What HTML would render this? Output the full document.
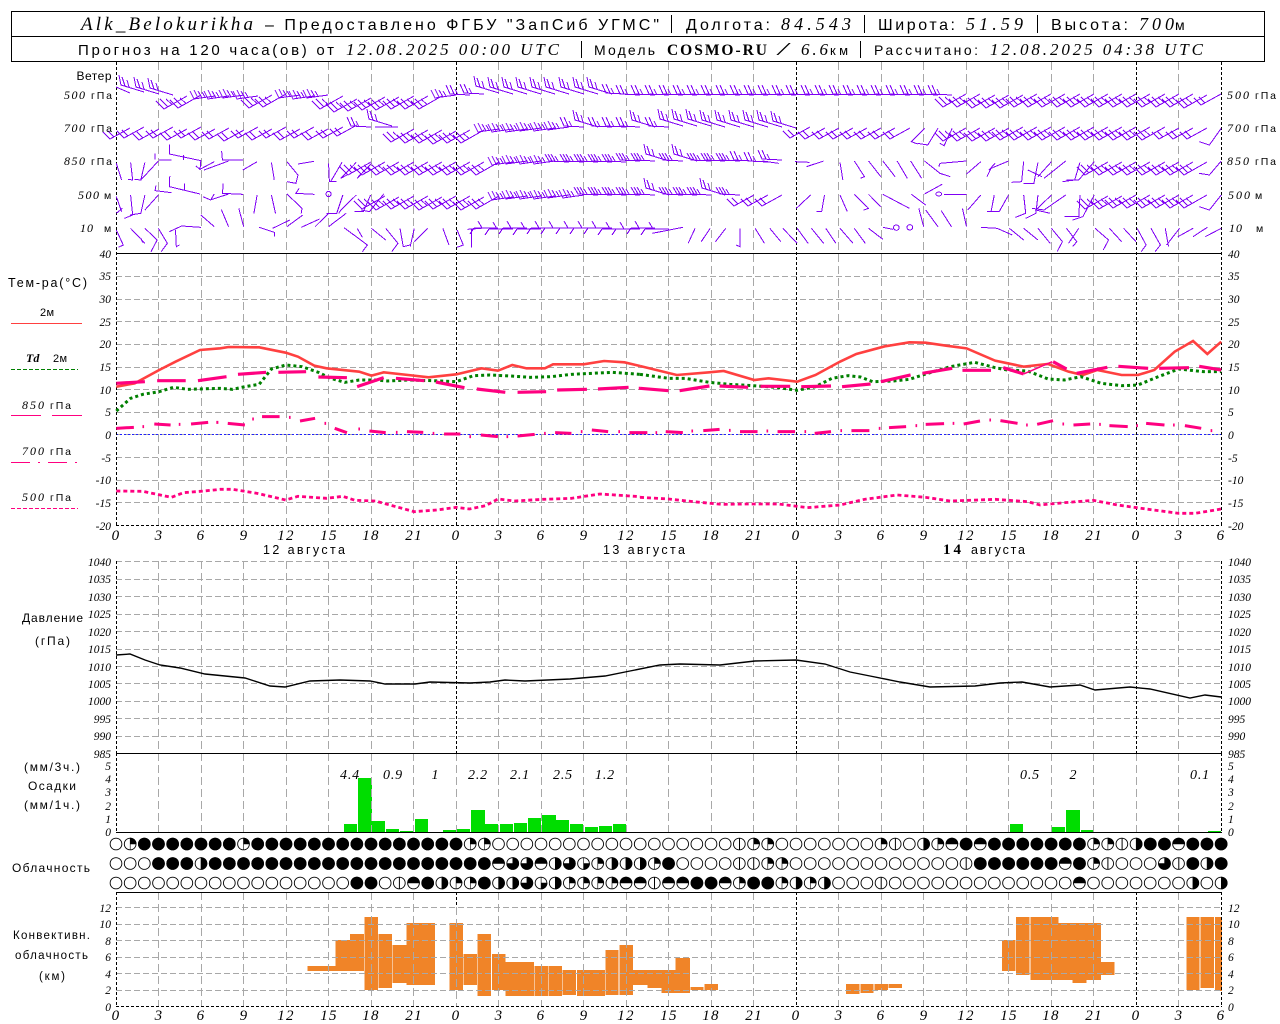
<!DOCTYPE html>
<html><head><meta charset="utf-8"><title>Meteogram</title>
<style>
html,body{margin:0;padding:0;background:#fff}
svg{display:block}
text{fill:#000;font-family:"Liberation Sans","DejaVu Sans",sans-serif;font-size:12px}
.i{font-family:"Liberation Serif",serif;font-style:italic}
.t{font-family:"Liberation Serif",serif;font-style:italic;font-size:11.5px}
.b{font-family:"Liberation Serif",serif;font-weight:bold}
.x{font-family:"Liberation Serif",serif;font-style:italic;font-size:15px;text-anchor:middle;letter-spacing:1.2px}
.e{text-anchor:end}
.n path{vector-effect:non-scaling-stroke}
.w{fill:none;stroke:#7f00f4;stroke-width:1;shape-rendering:crispEdges}
.w path{fill:none}
</style></head><body>
<svg xmlns="http://www.w3.org/2000/svg" width="1280" height="1024" viewBox="0 0 1280 1024">
<defs>
<path id="S" d="M0 0L-23 13L-31 5M-19 11L-27 3M-15 8.5L-21 3"/>
<path id="Z" d="M0 0L-20 11L-27 4M-16 9L-22 3"/>
<path id="Y" d="M0 0L-21 3L-25-5M-17 2L-21-6M-13 2L-17-5M-10 1L-13-4"/>
<path id="N" d="M0 0L-23-7L-25-17M-19-6L-22-15M-15-5L-17-12"/>
<path id="W" d="M0 0L-20-1L-24-10M-16-1L-20-10M-12 0L-15-6"/>
<path id="R" d="M0 0L-20-1L-24-8M-17-1L-21-8M-14-1L-18-8M-11-1L-14-6"/>
<path id="F" d="M0 0H-24M-16 0L-20-7M-24 0L-28 6"/>
<path id="q" d="M0 0V-6A6 6 0 0 1 6 0zM0 0V6"/>
<path id="l" d="M0 0H6A6 6 0 0 1 0 6zM0 0V-6"/>
<path id="r" d="M0-6A6 6 0 0 1 0 6z"/>
<path id="h" d="M-6 0A6 6 0 0 1 6 0z"/>
<path id="t" d="M0 0V-6A6 6 0 0 1 0 6A6 6 0 0 1-6 0z"/>
<path id="v" d="M0-6V6" stroke="#000" stroke-width="1"/>
</defs>

<!-- header -->
<rect x="11.5" y="11.5" width="1253" height="50" fill="none" stroke="#000" stroke-width="1"/>
<path d="M11 36.5H1265" stroke="#000" stroke-width="1"/>
<text class="i" x="81" y="30" style="font-size:19px" textLength="172">Alk_Belokurikha</text>
<text x="265" y="30" style="font-size:16px" textLength="394">– Предоставлено ФГБУ "ЗапСиб УГМС"</text>
<path d="M671.5 15V33M864.5 15V33M1037.5 15V33M581.5 41V58M860.5 41V58" stroke="#000"/>
<text x="686" y="30" style="font-size:16px" textLength="84">Долгота:</text>
<text class="i" x="781" y="30" style="font-size:18px" textLength="70">84.543</text>
<text x="878" y="30" style="font-size:16px" textLength="77">Широта:</text>
<text class="i" x="966" y="30" style="font-size:18px" textLength="57">51.59</text>
<text x="1051" y="30" style="font-size:16px" textLength="77">Высота:</text>
<text class="i" x="1139" y="30" style="font-size:18px" textLength="35">700</text>
<text x="1175" y="30" style="font-size:14px" textLength="11">м</text>
<text x="78" y="55" style="font-size:15px" textLength="256">Прогноз на 120 часа(ов) от</text>
<text class="i" x="346" y="55" style="font-size:17px" textLength="213">12.08.2025 00:00 UTC</text>
<text x="594" y="55" style="font-size:14px" textLength="61">Модель</text>
<text class="b" x="667" y="55" style="font-size:15.5px" textLength="100">COSMO-RU</text>
<text class="i" x="778" y="55" style="font-size:18px" textLength="10" lengthAdjust="spacingAndGlyphs">/</text>
<text class="i" x="801" y="55" style="font-size:17px" textLength="27">6.6</text>
<text x="830" y="55" style="font-size:13px" textLength="18">км</text>
<text x="874" y="55" style="font-size:14px" textLength="104">Рассчитано:</text>
<text class="i" x="990" y="55" style="font-size:17px" textLength="213">12.08.2025 04:38 UTC</text>

<!-- green precipitation bars -->
<g fill="#00dd00" shape-rendering="crispEdges">
<rect x="344" y="824" width="13" height="8"/><rect x="358" y="778" width="14" height="54"/><rect x="372" y="821" width="13" height="11"/><rect x="386" y="829" width="13" height="3"/><rect x="400" y="831" width="13" height="1"/><rect x="415" y="819" width="13" height="13"/>
<rect x="443" y="830" width="13" height="2"/><rect x="457" y="829" width="13" height="3"/><rect x="471" y="810" width="14" height="22"/><rect x="485" y="824" width="13" height="8"/><rect x="500" y="824" width="13" height="8"/><rect x="514" y="823" width="13" height="9"/><rect x="528" y="818" width="13" height="14"/><rect x="542" y="815" width="14" height="17"/><rect x="556" y="820" width="13" height="12"/><rect x="570" y="824" width="13" height="8"/><rect x="585" y="827" width="13" height="5"/><rect x="599" y="826" width="13" height="6"/><rect x="613" y="824" width="13" height="8"/>
<rect x="1010" y="824" width="13" height="8"/><rect x="1052" y="827" width="13" height="5"/><rect x="1066" y="810" width="14" height="22"/><rect x="1081" y="830" width="13" height="2"/><rect x="1208" y="831" width="13" height="1"/>
</g>

<!-- orange convective bars -->
<path shape-rendering="crispEdges" fill="none" stroke="#f08428" stroke-width="14.2" d="M314.4 966V971M328.6 966V971M342.7 940V971M356.9 934V971M399.4 945V983M413.6 923V985M427.7 923V985M512.8 962V996M526.9 962V996M597.8 970V996M640.3 970V985M654.5 970V988M668.6 970V993M682.8 958V993M1051.2 917V980M1065.4 923V980M1079.6 923V983M1093.7 923V980"/>
<path shape-rendering="crispEdges" fill="none" stroke="#f08428" stroke-width="13.4" d="M371.1 917V990M385.2 934V988M456.1 923V990M470.3 954V985M484.4 934V996M498.6 954V990M541.1 966V996M555.3 966V996M569.4 970V995M583.6 970V996M612 950V995M626.1 945V995M697 987V990M711.1 984V990M852.8 984V994M867 984V993M881.2 984V990M895.4 984V988M1008.7 940V971M1022.9 917V975M1037.1 917V980M1107.9 962V975M1193 917V990M1207.1 917V988"/>
<path shape-rendering="crispEdges" fill="none" stroke="#f08428" stroke-width="7" d="M1218.5 917V991"/>

<!-- horizontal grid -->
<path fill="none" stroke="#a8a8a8" stroke-width="1" stroke-dasharray="6 3" shape-rendering="crispEdges" d="M116 276.5H1221M116 299.5H1221M116 321.5H1221M116 344.5H1221M116 367.5H1221M116 389.5H1221M116 412.5H1221M116 434.5H1221M116 457.5H1221M116 480.5H1221M116 502.5H1221M116 561.5H1221M116 579.5H1221M116 596.5H1221M116 614.5H1221M116 631.5H1221M116 649.5H1221M116 666.5H1221M116 683.5H1221M116 701.5H1221M116 718.5H1221M116 736.5H1221M116 907.5H1221M116 924.5H1221M116 940.5H1221M116 957.5H1221M116 973.5H1221M116 990.5H1221"/>
<path d="M116 434.5H1221" stroke="#2020ff" stroke-width="1" stroke-dasharray="2 2" shape-rendering="crispEdges"/>

<!-- vertical grid -->
<path fill="none" stroke="#a8a8a8" stroke-width="1" stroke-dasharray="8 4" shape-rendering="crispEdges" d="M158.5 62V525M201.5 62V525M243.5 62V525M286.5 62V525M328.5 62V525M371.5 62V525M413.5 62V525M498.5 62V525M541.5 62V525M583.5 62V525M626.5 62V525M668.5 62V525M711.5 62V525M753.5 62V525M838.5 62V525M881.5 62V525M923.5 62V525M966.5 62V525M1008.5 62V525M1051.5 62V525M1093.5 62V525M1178.5 62V525
M158.5 561V832M201.5 561V832M243.5 561V832M286.5 561V832M328.5 561V832M371.5 561V832M413.5 561V832M456.5 753V832M498.5 561V832M541.5 561V832M583.5 561V832M626.5 561V832M668.5 561V832M711.5 561V832M753.5 561V832M796.5 753V832M838.5 561V832M881.5 561V832M923.5 561V832M966.5 561V832M1008.5 561V832M1051.5 561V832M1093.5 561V832M1136.5 753V832M1178.5 561V832
M158.5 892V1006M201.5 892V1006M243.5 892V1006M286.5 892V1006M328.5 892V1006M371.5 892V1006M413.5 892V1006M456.5 907V1006M498.5 892V1006M541.5 892V1006M583.5 892V1006M626.5 892V1006M668.5 892V1006M711.5 892V1006M753.5 892V1006M838.5 892V1006M881.5 892V1006M923.5 892V1006M966.5 892V1006M1008.5 892V1006M1051.5 892V1006M1093.5 892V1006M1178.5 892V1006"/>
<path fill="none" stroke="#000" stroke-width="1" stroke-dasharray="3 2" shape-rendering="crispEdges" d="M116.5 62V525M456.5 62V525M796.5 62V525M1136.5 62V525M1221.5 62V525M116.5 561V753M456.5 561V753M796.5 561V753M1136.5 561V753M1221.5 561V753M116.5 753V832M1221.5 753V832M116.5 892V1006M456.5 892V907M796.5 892V1006M1136.5 892V1006M1221.5 892V1006M116 525.5H1222M116 1006.5H1222"/>
<path fill="none" stroke="#000" stroke-width="1" shape-rendering="crispEdges" d="M116 253.5H1222M116 753.5H1222M116 832.5H1222M116 892.5H1222"/>

<!-- temperature curves -->
<g class="n" fill="none">
<g transform="translate(0 255) scale(.40816 .33333)">
<path stroke="#ff4040" stroke-width="2.6" d="M285 395L330 385L390 345L430 320L490 285L540 280L560 276L635 277L700 293L730 305L770 332L800 340L880 350L910 362L940 352L1000 360L1050 367L1118 358L1180 340L1220 347L1255 330L1290 340L1335 340L1355 328L1430 328L1480 318L1530 322L1568 333"/>
<path stroke="#008000" stroke-width="3" stroke-dasharray="3 3" d="M285 468L320 430L350 418L390 410L425 397L460 403L540 400L570 403L600 395L635 388L665 342L700 330L740 335L780 352L810 370L845 382L880 375L920 375L950 378L1000 375L1060 377L1118 380L1160 362L1200 360L1250 363L1300 367L1350 365L1400 358L1500 352L1568 358"/>
<path stroke="#ff0080" stroke-width="2.8" stroke-dasharray="4 3" d="M285 708L350 709L420 727L450 713L500 708L540 703L570 703L630 715L700 735L730 724L800 730L840 724L870 736L920 738L970 755L1015 770L1070 765L1118 757L1150 762L1190 752L1220 732L1260 738L1330 733L1400 730L1470 717L1568 725"/>
<path stroke="#ff0080" stroke-width="3" d="M285 520L328 517M349 515L353 515M378 507L418 510M438 508L442 508M468 507L510 502M530 502L535 502M558 505L600 510M618 492L622 492M642 485L685 485M708 487L712 487M735 498L772 490M795 505L799 505M820 520L850 533M878 522L882 522M905 528L945 533M970 532L974 532M997 530L1037 532M1060 535L1064 535M1088 537L1128 537M1150 545L1154 545M1178 540L1220 545M1241 545L1245 545M1268 543L1310 538M1333 535L1337 535M1360 533L1400 535M1423 530L1427 530M1450 525L1490 530M1515 530L1519 530M1542 533L1568 533"/>
<path stroke="#ff0080" stroke-width="3.2" d="M285 385L355 380M385 377L455 377M485 377L555 365M583 358L652 352M682 352L750 350M780 366L850 368M875 395L940 368M970 370L1040 377M1068 381L1138 398M1168 402L1238 412M1268 412L1338 410M1365 405L1438 403M1465 402L1540 397M1565 400L1568 400"/>
</g>
<g transform="translate(640 255) scale(.40816 .33333)">
<path stroke="#ff4040" stroke-width="2.6" d="M0 333L90 360L170 352L205 348L280 375L315 370L385 380L430 360L490 320L530 297L600 274L660 262L700 263L750 272L800 280L870 317L940 335L1000 327L1050 350L1085 360L1120 345L1180 360L1220 360L1260 345L1310 290L1355 258L1390 297L1424 260"/>
<path stroke="#008000" stroke-width="3" stroke-dasharray="3 3" d="M0 358L70 370L110 370L170 382L220 388L290 393L340 398L385 406L430 395L470 370L510 362L540 366L570 380L620 378L660 373L700 357L760 335L820 322L870 338L900 345L950 348L1000 372L1040 375L1080 365L1130 385L1180 392L1220 390L1270 365L1320 342L1380 350L1424 350"/>
<path stroke="#ff0080" stroke-width="2.8" stroke-dasharray="4 3" d="M0 727L70 732L130 740L200 748L260 747L340 747L410 758L490 750L550 733L630 720L700 727L760 738L870 733L950 740L980 750L1040 743L1110 736L1170 750L1240 762L1320 775L1360 775L1424 762"/>
<path stroke="#ff0080" stroke-width="3" d="M0 533L18 533M38 533L42 533M63 530L105 533M126 528L130 528M155 527L195 523M218 526L222 526M245 530L288 530M310 528L314 528M337 530L380 530M403 530L407 530M428 535L468 530M491 527L495 527M518 527L562 527M585 520L589 520M610 518L652 515M675 512L679 512M700 508L745 506M766 505L770 505M793 507L833 498M856 495L860 495M883 497L925 505M946 510L950 510M973 508L1012 497M1035 507L1039 507M1062 510L1103 507M1125 508L1129 508M1150 512L1195 515M1216 512L1220 512M1240 505L1285 510M1306 510L1310 510M1335 512L1375 520M1398 527L1402 527"/>
<path stroke="#ff0080" stroke-width="3.2" d="M0 400L70 407M97 407L170 393M195 393L265 397M295 394L368 394M395 395L468 393M495 395L565 387M590 380L663 360M692 355L765 340M790 346L860 346M890 338L940 357M1012 320L1045 342M1070 355L1145 337M1172 334L1245 340M1272 340L1345 338M1370 334L1424 345"/>
<path stroke="#ff0080" stroke-width="1.5" d="M940 357L1010 320"/>
</g>
</g>

<!-- pressure -->
<path fill="none" stroke="#000" stroke-width="1.4" d="M116 655L130 654L145 660L160 665L180 668L205 674L245 678L270 686L285 687L310 681L340 680L370 681L385 684L415 684L430 682L470 683L490 682L505 680L525 681L570 679L605 676L630 671L660 665L680 664L720 665L755 661L796 660L825 664L850 672L870 676L900 682L930 687L975 686L1000 683L1022 682L1050 687L1080 685L1095 690L1130 687L1150 689L1190 698L1205 695L1221 697"/>

<!-- cloud rows -->
<g fill="none" stroke-linecap="round">
<path stroke="#000" stroke-width="12.6" stroke-dasharray="0 14.167" d="M116 844H1222M116 863.5H1222M116 883H1222"/>
<path stroke="#fff" stroke-width="10.8" stroke-dasharray="0 14.167" d="M116 844H1222M116 863.5H1222M116 883H1222"/>
<path stroke="#000" stroke-width="12.6" stroke-dasharray="0 14.167" d="M144.3 844H229.5M257.7 844H456.2M966.2 844h.1M994.5 844H1079.7M1150.4 844H1164.7M1192.9 844H1221.5M158.5 863.5H186.9M215.2 863.5H484.5M668.6 863.5h.1M980.4 863.5H1051.3M1079.6 863.5h.1M1192.9 863.5h.1M1221.3 863.5h.1M356.9 883H371.2M427.7 883h.1M484.4 883h.1M697 883H711.2M753.7 883H767.9"/>
</g>
<g fill="#000" stroke="#000" stroke-width=".6">
<use href="#q" x="130.2" y="844"/><use href="#q" x="243.5" y="844"/><use href="#q" x="470.3" y="844"/><use href="#q" x="484.4" y="844"/><use href="#v" x="739.5" y="844"/><use href="#q" x="753.7" y="844"/><use href="#q" x="767.8" y="844"/><use href="#q" x="881.2" y="844"/><use href="#v" x="895.4" y="844"/><use href="#r" x="923.7" y="844"/><use href="#q" x="937.9" y="844"/><use href="#h" x="952" y="844"/><use href="#h" x="980.4" y="844"/><use href="#q" x="1093.7" y="844"/><use href="#q" x="1107.9" y="844"/><use href="#v" x="1122.1" y="844"/><use href="#r" x="1136.2" y="844"/><use href="#h" x="1178.8" y="844"/>
<use href="#r" x="201" y="863.5"/><use href="#h" x="498.6" y="863.5"/><use href="#t" x="512.8" y="863.5"/><use href="#t" x="526.9" y="863.5"/><use href="#h" x="541.1" y="863.5"/><use href="#r" x="555.3" y="863.5"/><use href="#t" x="569.4" y="863.5"/><use href="#l" x="583.6" y="863.5"/><use href="#q" x="597.8" y="863.5"/><use href="#r" x="612" y="863.5"/><use href="#r" x="626.1" y="863.5"/><use href="#v" x="626.1" y="863.5"/><use href="#r" x="640.3" y="863.5"/><use href="#q" x="654.5" y="863.5"/><use href="#v" x="739.5" y="863.5"/><use href="#v" x="753.7" y="863.5"/><use href="#q" x="767.8" y="863.5"/><use href="#q" x="782" y="863.5"/><use href="#v" x="966.2" y="863.5"/><use href="#h" x="1065.4" y="863.5"/><use href="#q" x="1093.7" y="863.5"/><use href="#v" x="1107.9" y="863.5"/><use href="#t" x="1164.6" y="863.5"/><use href="#v" x="1178.8" y="863.5"/><use href="#r" x="1207.1" y="863.5"/>
<use href="#v" x="399.4" y="883"/><use href="#h" x="413.6" y="883"/><use href="#r" x="441.9" y="883"/><use href="#q" x="456.1" y="883"/><use href="#q" x="470.3" y="883"/><use href="#r" x="498.6" y="883"/><use href="#r" x="512.8" y="883"/><use href="#t" x="526.9" y="883"/><use href="#l" x="541.1" y="883"/><use href="#r" x="555.3" y="883"/><use href="#q" x="569.4" y="883"/><use href="#q" x="583.6" y="883"/><use href="#q" x="597.8" y="883"/><use href="#q" x="612" y="883"/><use href="#h" x="626.1" y="883"/><use href="#h" x="640.3" y="883"/><use href="#v" x="654.5" y="883"/><use href="#h" x="668.6" y="883"/><use href="#h" x="682.8" y="883"/><use href="#h" x="725.3" y="883"/><use href="#q" x="739.5" y="883"/><use href="#q" x="782" y="883"/><use href="#r" x="796.2" y="883"/><use href="#q" x="810.3" y="883"/><use href="#r" x="824.5" y="883"/><use href="#v" x="881.2" y="883"/><use href="#h" x="1079.6" y="883"/><use href="#r" x="1192.9" y="883"/><use href="#r" x="1221.3" y="883"/>
</g>

<!-- wind barbs -->
<g class="w">
<!-- 500 hPa -->
<path d="M116 87L130 93"/>
<use href="#N" x="144" y="92"/><use href="#N" x="159" y="94"/><use href="#N" x="173" y="95"/>
<use href="#S" x="187" y="96"/><use href="#S" x="201" y="95"/>
<use href="#Y" x="215" y="96"/><use href="#Y" x="229" y="96"/><use href="#Y" x="244" y="95"/><use href="#Y" x="258" y="96"/>
<use href="#S" x="272" y="95"/><use href="#S" x="286" y="94"/><use href="#Y" x="300" y="95"/><use href="#Y" x="328" y="95"/><use href="#Y" x="314" y="96"/>
<use href="#S" x="343" y="96"/><use href="#S" x="357" y="99"/><use href="#S" x="371" y="98"/><use href="#S" x="385" y="97"/><use href="#S" x="399" y="97"/><use href="#S" x="414" y="96"/><use href="#S" x="428" y="96"/><use href="#S" x="442" y="96"/>
<use href="#Y" x="456" y="95"/><use href="#W" x="470" y="95"/><use href="#W" x="484" y="94"/>
<use href="#N" x="499" y="93"/><use href="#N" x="513" y="94"/><use href="#N" x="527" y="94"/><use href="#N" x="541" y="94"/><use href="#N" x="555" y="94"/><use href="#N" x="569" y="94"/><use href="#N" x="584" y="94"/><use href="#N" x="598" y="94"/><use href="#N" x="612" y="94"/>
<use href="#W" x="626" y="94"/><use href="#W" x="640" y="95"/><use href="#W" x="655" y="95"/><use href="#W" x="669" y="95"/><use href="#W" x="683" y="95"/><use href="#W" x="697" y="95"/><use href="#W" x="711" y="95"/><use href="#W" x="725" y="95"/><use href="#W" x="740" y="95"/><use href="#W" x="754" y="95"/><use href="#W" x="768" y="95"/><use href="#W" x="782" y="95"/><use href="#W" x="796" y="95"/><use href="#W" x="810" y="95"/><use href="#W" x="825" y="95"/><use href="#W" x="839" y="95"/><use href="#W" x="853" y="95"/><use href="#W" x="867" y="95"/><use href="#W" x="881" y="95"/><use href="#W" x="895" y="95"/><use href="#W" x="910" y="95"/><use href="#W" x="924" y="95"/><use href="#W" x="938" y="95"/><use href="#W" x="952" y="95"/>
<use href="#S" x="966" y="94"/><use href="#S" x="980" y="94"/><use href="#S" x="995" y="95"/><use href="#S" x="1009" y="95"/><use href="#S" x="1023" y="95"/><use href="#S" x="1037" y="94"/><use href="#S" x="1051" y="94"/><use href="#S" x="1065" y="94"/><use href="#S" x="1080" y="94"/><use href="#S" x="1094" y="94"/><use href="#S" x="1108" y="94"/><use href="#S" x="1122" y="94"/><use href="#S" x="1136" y="94"/><use href="#S" x="1150" y="94"/><use href="#S" x="1165" y="94"/><use href="#S" x="1179" y="94"/><use href="#S" x="1193" y="94"/><use href="#S" x="1207" y="95"/><use href="#Z" x="1221" y="94"/>
<!-- 700 hPa -->
<use href="#Z" x="130" y="128"/><use href="#Z" x="144" y="127"/><use href="#Z" x="159" y="129"/><use href="#Z" x="173" y="127"/><use href="#Z" x="187" y="129"/><use href="#Z" x="201" y="127"/><use href="#Z" x="215" y="129"/><use href="#Z" x="229" y="128"/><use href="#Z" x="244" y="130"/><use href="#Z" x="258" y="127"/><use href="#Z" x="272" y="129"/><use href="#Z" x="286" y="127"/><use href="#Z" x="300" y="129"/><use href="#Z" x="314" y="127"/><use href="#Z" x="328" y="129"/><use href="#Z" x="343" y="127"/><use href="#Z" x="357" y="125"/>
<use href="#W" x="371" y="127"/><use href="#N" x="392" y="126"/><path d="M398 127H375"/>
<use href="#S" x="414" y="129"/><use href="#S" x="428" y="130"/><use href="#S" x="442" y="130"/><use href="#S" x="456" y="131"/><use href="#S" x="470" y="130"/><use href="#S" x="484" y="130"/>
<use href="#Y" x="499" y="129"/><use href="#Y" x="513" y="129"/><use href="#Y" x="527" y="129"/><use href="#Y" x="541" y="128"/><use href="#Y" x="555" y="128"/><use href="#Y" x="569" y="127"/><use href="#W" x="584" y="127"/>
<use href="#N" x="598" y="127"/><use href="#W" x="612" y="127"/><use href="#W" x="626" y="127"/><use href="#W" x="640" y="127"/><use href="#N" x="655" y="127"/><use href="#W" x="669" y="127"/><use href="#N" x="683" y="126"/><use href="#N" x="697" y="126"/><use href="#N" x="711" y="126"/><use href="#N" x="725" y="127"/><use href="#N" x="740" y="127"/><use href="#N" x="754" y="127"/><use href="#N" x="768" y="127"/><use href="#N" x="782" y="127"/><use href="#N" x="796" y="128"/>
<use href="#Z" x="810" y="127"/><use href="#Z" x="825" y="128"/><use href="#Z" x="839" y="128"/><use href="#Z" x="853" y="128"/><use href="#Z" x="867" y="128"/><use href="#Z" x="881" y="128"/><use href="#Z" x="895" y="128"/><use href="#Z" x="910" y="128"/>
<use href="#S" x="966" y="128"/><use href="#S" x="980" y="128"/><use href="#S" x="995" y="128"/><use href="#S" x="1009" y="128"/><use href="#S" x="1023" y="127"/><use href="#S" x="1037" y="127"/><use href="#S" x="1051" y="127"/><use href="#S" x="1065" y="127"/><use href="#S" x="1080" y="127"/><use href="#S" x="1094" y="127"/><use href="#S" x="1108" y="127"/><use href="#S" x="1122" y="127"/><use href="#S" x="1136" y="127"/><use href="#S" x="1150" y="127"/><use href="#S" x="1165" y="127"/><use href="#Z" x="1179" y="128"/><use href="#Z" x="1193" y="128"/><use href="#Z" x="1207" y="128"/>
<!-- 850 hPa, 500 m -->
<use href="#S" x="371" y="162"/><use href="#S" x="385" y="162"/><use href="#S" x="399" y="162"/><use href="#S" x="414" y="162"/><use href="#S" x="428" y="162"/><use href="#S" x="442" y="162"/><use href="#S" x="456" y="162"/><use href="#S" x="470" y="162"/><use href="#S" x="484" y="162"/><use href="#S" x="499" y="162"/>
<use href="#Y" x="513" y="162"/><use href="#Y" x="527" y="161"/><use href="#Y" x="541" y="161"/><use href="#Y" x="555" y="161"/>
<use href="#R" x="569" y="162"/><use href="#R" x="584" y="162"/><use href="#R" x="598" y="162"/><use href="#R" x="612" y="162"/><use href="#R" x="626" y="162"/><use href="#R" x="640" y="161"/><use href="#R" x="655" y="161"/><use href="#N" x="669" y="161"/><use href="#R" x="683" y="161"/><use href="#N" x="697" y="161"/><use href="#R" x="711" y="161"/><use href="#R" x="725" y="161"/><use href="#R" x="740" y="161"/><use href="#W" x="754" y="161"/><use href="#W" x="768" y="162"/><use href="#W" x="782" y="160"/>
<use href="#S" x="1108" y="162"/><use href="#S" x="1122" y="162"/><use href="#S" x="1136" y="162"/><use href="#S" x="1150" y="162"/><use href="#S" x="1165" y="162"/><use href="#S" x="1179" y="162"/><use href="#S" x="1193" y="162"/><use href="#S" x="1207" y="162"/>
<use href="#S" x="385" y="196"/><use href="#S" x="399" y="197"/><use href="#S" x="414" y="196"/><use href="#S" x="428" y="196"/><use href="#S" x="442" y="197"/><use href="#S" x="456" y="196"/><use href="#S" x="470" y="196"/><use href="#S" x="484" y="197"/><use href="#S" x="499" y="196"/>
<use href="#Y" x="513" y="197"/><use href="#Y" x="527" y="196"/><use href="#Y" x="541" y="196"/><use href="#Y" x="555" y="196"/><use href="#Y" x="569" y="195"/><use href="#Y" x="584" y="195"/>
<use href="#R" x="598" y="195"/><use href="#R" x="612" y="195"/><use href="#R" x="626" y="195"/><use href="#R" x="640" y="195"/><use href="#R" x="655" y="195"/><use href="#N" x="669" y="195"/><use href="#R" x="683" y="195"/><use href="#R" x="697" y="195"/><use href="#R" x="711" y="195"/><use href="#N" x="725" y="195"/><use href="#R" x="740" y="195"/>
<use href="#Z" x="754" y="195"/><use href="#Z" x="768" y="195"/><use href="#Z" x="782" y="195"/>
<use href="#S" x="1108" y="196"/><use href="#S" x="1122" y="196"/><use href="#S" x="1136" y="195"/><use href="#S" x="1150" y="195"/><use href="#S" x="1165" y="195"/><use href="#S" x="1179" y="195"/><use href="#S" x="1193" y="195"/><use href="#S" x="1207" y="195"/>
<!-- 10 m -->
<use href="#F" x="498" y="228"/><use href="#F" x="513" y="229"/><use href="#F" x="527" y="228"/><use href="#F" x="541" y="229"/><use href="#F" x="555" y="228"/><use href="#F" x="569" y="228"/><use href="#F" x="584" y="228"/><use href="#F" x="598" y="228"/><use href="#F" x="612" y="228"/><use href="#F" x="626" y="229"/><use href="#F" x="640" y="229"/><use href="#F" x="655" y="228"/><use href="#F" x="669" y="229"/>
<g class="n" transform="scale(.40816 .33333)">
<path d="M285 490L298 540M320 487L325 540L314 538M355 487L345 540L330 538M388 483L345 540M390 480H420M380 460V478M415 433V462L492 482M450 465V480M492 482L490 510M525 485L490 508L480 498M560 483L500 510M595 480H545L543 453M630 485L595 510M665 487L672 540M703 485L730 525L725 550L703 545M769 484L730 492M805 490L807 545H825M838 487L810 545M873 487L835 535L850 525M910 490L875 535L885 520"/>
<path d="M285 590L298 635M285 640L300 625M320 585L325 645L305 655M355 585L345 640L318 645M388 585L355 630M420 578L380 572L382 557M490 582L415 560L416 528M452 550V570M525 582L516 600L497 590M560 582L515 600M595 583L545 580L547 550M630 585L622 640M665 585L675 640M703 582L740 625L738 640M770 583L725 580L733 565M840 585L825 640H800M873 585L835 630L830 640M908 585L890 635H868M940 582L905 635L885 630"/>
<path d="M285 690L302 735L290 742M320 685L355 730M345 715L350 728M355 685L385 720L370 755M388 685L410 730L395 755M492 682L445 678L415 695M430 690L432 740L440 735M525 680L492 645M560 680L542 628M597 680L585 625M635 682L672 697V710M710 660L668 685M742 645L703 680M783 657L738 682M805 640L772 680M848 640L805 680M843 683L900 735L888 755M875 685L888 712M910 685L945 720M945 685L975 730L960 755M980 685L988 740L1005 735M1015 685L1005 740M1048 685L1015 725M1085 685L1100 735M1120 690L1135 735L1120 742M1155 685V742M1145 688L1180 685"/>
<ellipse cx="805" cy="582" rx="6" ry="8" fill="none" stroke="#7f00f4" vector-effect="non-scaling-stroke"/>
</g>
<g class="n" transform="translate(640 0) scale(.40816 .33333)">
<path d="M300 483L340 490M380 485L415 487M408 500L450 483M490 487L497 540M525 483L550 530L540 535M560 483L590 530M595 483L625 530M630 483L655 535M663 483L690 535M697 483L735 520L760 530M800 483L735 490L732 500M835 485L800 522M903 483L860 505L850 530M870 490L855 510M940 485L935 545L910 547M975 487L965 550H940M1008 485L975 530M950 510L985 530M1043 483L990 535M1078 487L1065 540L1035 545M1113 485L1075 540H1045"/>
<path d="M418 585L383 625M452 585L445 635H432M490 585L508 635M525 583L560 625L548 630M560 583L590 620M595 583L660 625M665 583L700 615M740 553L697 582M800 583H745M835 585L803 630M868 585L860 635H850M903 585L880 635H860M940 585L945 640L920 652M975 585L970 640L945 655M1008 585L970 630L1005 640M1043 585L990 630L960 625M1078 585L1075 650H1040M1113 585L1085 650L1060 660"/>
<path d="M105 682L30 700M135 685L118 730M172 685L150 725M210 685L185 725M245 685V740L235 735M282 685L305 730M318 685L345 725M350 685L385 730M385 685L412 730M420 685L450 730M455 685L480 730M490 685L522 730M525 685L552 730M560 685L595 718M595 682L620 688M683 625L695 680M700 630L730 680M738 632L763 680M790 625L800 680M835 682L875 685L912 705M905 685L940 720M940 685L975 720M975 685L1005 730M1008 685L1035 725L1022 755M1045 685L1070 725L1060 740M1075 685L1050 730M1115 685L1148 720L1135 750M1150 685L1180 725M1185 685L1215 725M1218 685L1240 735L1228 755M1252 685L1275 735L1262 755M1287 685L1295 740M1322 685L1290 735M1355 685L1318 710M1390 682L1355 710M1424 685L1385 710"/>
<path d="M697 385L665 425L680 432M730 385L705 435L680 430M765 385L745 437L735 430M1424 385L1395 435L1370 425M1424 483L1395 525L1370 520M1424 585L1395 630L1370 620"/>
<ellipse cx="628" cy="683" rx="7" ry="8" fill="none" stroke="#7f00f4" vector-effect="non-scaling-stroke"/>
<ellipse cx="661" cy="682" rx="7" ry="8" fill="none" stroke="#7f00f4" vector-effect="non-scaling-stroke"/>
<ellipse cx="732" cy="582" rx="7" ry="6" fill="none" stroke="#7f00f4" vector-effect="non-scaling-stroke"/>
</g>
</g>

<!-- wind labels -->
<text class="e" x="112" y="80" style="letter-spacing:.5px">Ветер</text>
<text class="t" x="64" y="99" style="font-size:12px" textLength="21">500</text><text x="91" y="99" style="font-size:10.5px" textLength="21">гПа</text>
<text class="t" x="64" y="132" style="font-size:12px" textLength="21">700</text><text x="91" y="132" style="font-size:10.5px" textLength="21">гПа</text>
<text class="t" x="64" y="165" style="font-size:12px" textLength="21">850</text><text x="91" y="165" style="font-size:10.5px" textLength="21">гПа</text>
<text class="t" x="78" y="199" style="font-size:12px" textLength="21">500</text><text x="104" y="199" style="font-size:10.5px" textLength="8">м</text>
<text class="t" x="80" y="232" style="font-size:12px" textLength="13">10</text><text x="104" y="232" style="font-size:10.5px" textLength="8">м</text>
<text class="t" x="1227" y="99" style="font-size:12px" textLength="22">500</text><text x="1255" y="99" style="font-size:10.5px" textLength="21">гПа</text>
<text class="t" x="1227" y="132" style="font-size:12px" textLength="22">700</text><text x="1255" y="132" style="font-size:10.5px" textLength="21">гПа</text>
<text class="t" x="1227" y="165" style="font-size:12px" textLength="22">850</text><text x="1255" y="165" style="font-size:10.5px" textLength="21">гПа</text>
<text class="t" x="1228" y="199" style="font-size:12px" textLength="22">500</text><text x="1255" y="199" style="font-size:10.5px" textLength="8">м</text>
<text class="t" x="1229" y="232" style="font-size:12px" textLength="13">10</text><text x="1256" y="232" style="font-size:10.5px" textLength="8">м</text>

<!-- temp legend -->
<text x="8" y="287" style="font-size:12.5px" textLength="79">Тем-ра(°С)</text>
<text x="40" y="316" style="font-size:11px" textLength="14">2м</text>
<path d="M11 323.5H82" stroke="#ff4040"/>
<text class="t" x="26" y="362" style="font-weight:bold;font-size:12px">Td</text><text x="53" y="362" style="font-size:11px" textLength="14">2м</text>
<path d="M11 369.5H78" stroke="#008000" stroke-dasharray="4 2"/>
<text class="t" x="22" y="409" style="font-size:12px" textLength="22">850</text><text x="50" y="409" style="font-size:10.5px" textLength="21">гПа</text>
<path d="M11 415.5H41M52 415.5H82" stroke="#ff0080"/>
<text class="t" x="22" y="455" style="font-size:12px" textLength="22">700</text><text x="50" y="455" style="font-size:10.5px" textLength="21">гПа</text>
<path d="M11 462.5H30M38 462.5H40M48 462.5H67M75 462.5H77" stroke="#ff0080"/>
<text class="t" x="22" y="501" style="font-size:12px" textLength="22">500</text><text x="50" y="501" style="font-size:10.5px" textLength="21">гПа</text>
<path d="M11 508.5H78" stroke="#ff0080" stroke-dasharray="4 2"/>

<!-- temp tick labels -->
<g class="t">
<text class="t e" x="111" y="258">40</text><text class="t e" x="111" y="280">35</text><text class="t e" x="111" y="303">30</text><text class="t e" x="111" y="326">25</text><text class="t e" x="111" y="348">20</text><text class="t e" x="111" y="371">15</text><text class="t e" x="111" y="394">10</text><text class="t e" x="111" y="416">5</text><text class="t e" x="111" y="439">0</text><text class="t e" x="111" y="462">-5</text><text class="t e" x="111" y="484">-10</text><text class="t e" x="111" y="507">-15</text><text class="t e" x="111" y="530">-20</text>
<text class="t" x="1228" y="258">40</text><text class="t" x="1228" y="280">35</text><text class="t" x="1228" y="303">30</text><text class="t" x="1228" y="326">25</text><text class="t" x="1228" y="348">20</text><text class="t" x="1228" y="371">15</text><text class="t" x="1228" y="394">10</text><text class="t" x="1228" y="416">5</text><text class="t" x="1228" y="439">0</text><text class="t" x="1228" y="462">-5</text><text class="t" x="1228" y="484">-10</text><text class="t" x="1228" y="507">-15</text><text class="t" x="1228" y="530">-20</text>
<!-- pressure -->
<text class="t e" x="111" y="566">1040</text><text class="t e" x="111" y="583">1035</text><text class="t e" x="111" y="601">1030</text><text class="t e" x="111" y="618">1025</text><text class="t e" x="111" y="636">1020</text><text class="t e" x="111" y="653">1015</text><text class="t e" x="111" y="671">1010</text><text class="t e" x="111" y="688">1005</text><text class="t e" x="111" y="705">1000</text><text class="t e" x="111" y="723">995</text><text class="t e" x="111" y="740">990</text><text class="t e" x="111" y="758">985</text>
<text class="t" x="1228" y="566">1040</text><text class="t" x="1228" y="583">1035</text><text class="t" x="1228" y="601">1030</text><text class="t" x="1228" y="618">1025</text><text class="t" x="1228" y="636">1020</text><text class="t" x="1228" y="653">1015</text><text class="t" x="1228" y="671">1010</text><text class="t" x="1228" y="688">1005</text><text class="t" x="1228" y="705">1000</text><text class="t" x="1228" y="723">995</text><text class="t" x="1228" y="740">990</text><text class="t" x="1228" y="758">985</text>
<!-- precip -->
<text class="t e" x="111" y="836">0</text><text class="t e" x="111" y="823">1</text><text class="t e" x="111" y="810">2</text><text class="t e" x="111" y="796">3</text><text class="t e" x="111" y="783">4</text><text class="t e" x="111" y="770">5</text>
<text class="t" x="1228" y="836">0</text><text class="t" x="1228" y="823">1</text><text class="t" x="1228" y="810">2</text><text class="t" x="1228" y="796">3</text><text class="t" x="1228" y="783">4</text><text class="t" x="1228" y="770">5</text>
<!-- conv -->
<text class="t e" x="111" y="1011">0</text><text class="t e" x="111" y="994">2</text><text class="t e" x="111" y="978">4</text><text class="t e" x="111" y="961">6</text><text class="t e" x="111" y="945">8</text><text class="t e" x="111" y="928">10</text><text class="t e" x="111" y="912">12</text>
<text class="t" x="1228" y="1011">0</text><text class="t" x="1228" y="994">2</text><text class="t" x="1228" y="978">4</text><text class="t" x="1228" y="961">6</text><text class="t" x="1228" y="945">8</text><text class="t" x="1228" y="928">10</text><text class="t" x="1228" y="912">12</text>
</g>

<!-- x labels (temperature) -->
<text class="x" x="116" y="540">0</text><text class="x" x="159" y="540">3</text><text class="x" x="201" y="540">6</text><text class="x" x="244" y="540">9</text><text class="x" x="286" y="540">12</text><text class="x" x="329" y="540">15</text><text class="x" x="371" y="540">18</text><text class="x" x="414" y="540">21</text><text class="x" x="456" y="540">0</text><text class="x" x="499" y="540">3</text><text class="x" x="541" y="540">6</text><text class="x" x="584" y="540">9</text><text class="x" x="626" y="540">12</text><text class="x" x="669" y="540">15</text><text class="x" x="711" y="540">18</text><text class="x" x="754" y="540">21</text><text class="x" x="796" y="540">0</text><text class="x" x="839" y="540">3</text><text class="x" x="881" y="540">6</text><text class="x" x="924" y="540">9</text><text class="x" x="966" y="540">12</text><text class="x" x="1009" y="540">15</text><text class="x" x="1051" y="540">18</text><text class="x" x="1094" y="540">21</text><text class="x" x="1136" y="540">0</text><text class="x" x="1179" y="540">3</text><text class="x" x="1221" y="540">6</text>
<!-- x labels (bottom) -->
<text class="x" x="116" y="1020">0</text><text class="x" x="159" y="1020">3</text><text class="x" x="201" y="1020">6</text><text class="x" x="244" y="1020">9</text><text class="x" x="286" y="1020">12</text><text class="x" x="329" y="1020">15</text><text class="x" x="371" y="1020">18</text><text class="x" x="414" y="1020">21</text><text class="x" x="456" y="1020">0</text><text class="x" x="499" y="1020">3</text><text class="x" x="541" y="1020">6</text><text class="x" x="584" y="1020">9</text><text class="x" x="626" y="1020">12</text><text class="x" x="669" y="1020">15</text><text class="x" x="711" y="1020">18</text><text class="x" x="754" y="1020">21</text><text class="x" x="796" y="1020">0</text><text class="x" x="839" y="1020">3</text><text class="x" x="881" y="1020">6</text><text class="x" x="924" y="1020">9</text><text class="x" x="966" y="1020">12</text><text class="x" x="1009" y="1020">15</text><text class="x" x="1051" y="1020">18</text><text class="x" x="1094" y="1020">21</text><text class="x" x="1136" y="1020">0</text><text class="x" x="1179" y="1020">3</text><text class="x" x="1221" y="1020">6</text>

<!-- dates -->
<text x="263" y="554" style="font-size:12.5px" textLength="82">12 августа</text>
<text x="603" y="554" style="font-size:12.5px" textLength="82">13 августа</text>
<text class="b" x="943" y="554" style="font-size:15px" textLength="18">14</text>
<text x="971" y="554" style="font-size:12.5px" textLength="54">августа</text>

<!-- panel labels -->
<text x="22" y="622" style="font-size:12px" textLength="61">Давление</text>
<text x="35" y="645" style="font-size:12px" textLength="35">(гПа)</text>
<text x="24" y="771" style="font-size:12px" textLength="56">(мм/3ч.)</text>
<text x="28" y="790" style="font-size:12px" textLength="48">Осадки</text>
<text x="24" y="809" style="font-size:12px" textLength="56">(мм/1ч.)</text>
<text x="12" y="872" style="font-size:12px" textLength="78">Облачность</text>
<text x="13" y="939" style="font-size:11.5px" textLength="77">Конвективн.</text>
<text x="15" y="959" style="font-size:11.5px" textLength="73">облачность</text>
<text x="39" y="980" style="font-size:11.5px" textLength="26">(км)</text>

<!-- precip totals -->
<g>
<text class="i" x="350" y="779" text-anchor="middle" style="font-size:14px;letter-spacing:.8px">4.4</text><text class="i" x="393" y="779" text-anchor="middle" style="font-size:14px;letter-spacing:.8px">0.9</text><text class="i" x="435" y="779" text-anchor="middle" style="font-size:14px">1</text><text class="i" x="478" y="779" text-anchor="middle" style="font-size:14px;letter-spacing:.8px">2.2</text><text class="i" x="520" y="779" text-anchor="middle" style="font-size:14px;letter-spacing:.8px">2.1</text><text class="i" x="563" y="779" text-anchor="middle" style="font-size:14px;letter-spacing:.8px">2.5</text><text class="i" x="605" y="779" text-anchor="middle" style="font-size:14px;letter-spacing:.8px">1.2</text><text class="i" x="1030" y="779" text-anchor="middle" style="font-size:14px;letter-spacing:.8px">0.5</text><text class="i" x="1073" y="779" text-anchor="middle" style="font-size:14px">2</text><text class="i" x="1200" y="779" text-anchor="middle" style="font-size:14px;letter-spacing:.8px">0.1</text>
</g>
</svg>
</body></html>
